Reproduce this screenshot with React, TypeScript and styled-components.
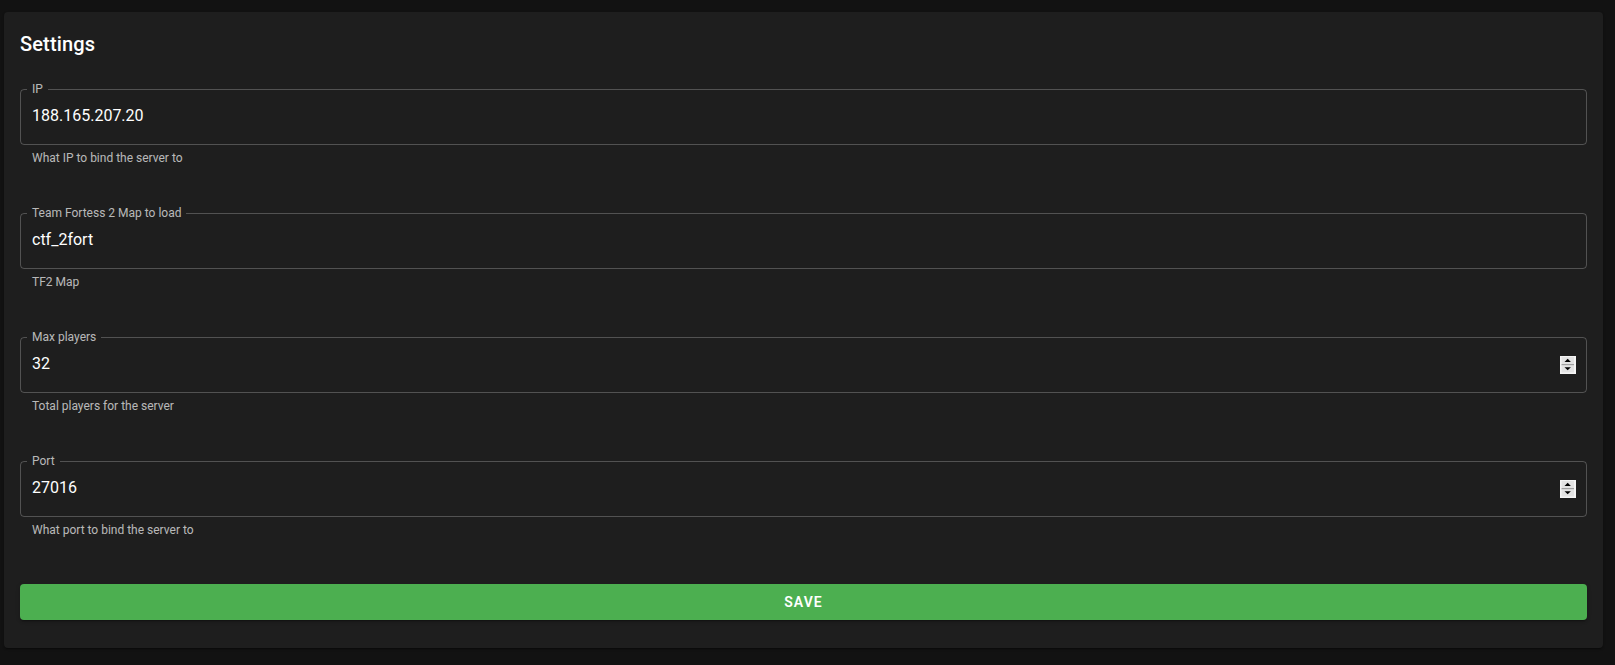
import React from "react";
import styled, { createGlobalStyle } from "styled-components";

const GlobalStyle = createGlobalStyle`
  html, body {
    margin: 0;
    padding: 0;
    background: #121212;
    font-family: Roboto, "Noto Sans", "Liberation Sans", sans-serif;
  }
`;

const Page = styled.div`
  padding: 12px 12px 18px 4px;
`;

const Paper = styled.section`
  background: #1e1e1e;
  border-radius: 4px;
  padding: 16px;
  box-shadow:
    0 2px 1px -1px rgba(0, 0, 0, 0.2),
    0 1px 1px 0 rgba(0, 0, 0, 0.14),
    0 1px 3px 0 rgba(0, 0, 0, 0.12);
`;

const Title = styled.h6`
  margin: 0 0 23px;
  color: #fff;
  font-size: 20px;
  font-weight: 500;
  line-height: 32px;
  letter-spacing: 0.15px;
`;

const Form = styled.form`
  display: flex;
  flex-direction: column;
  gap: 39px;
`;

const FieldGroup = styled.div`
  display: flex;
  flex-direction: column;
`;

const Outline = styled.fieldset`
  margin: 0;
  padding: 0 6px;
  border: 1px solid rgba(255, 255, 255, 0.23);
  border-radius: 4px;
  min-width: 0;
`;

const Label = styled.legend`
  padding: 0 5px;
  font-size: 12px;
  line-height: 12px;
  color: rgba(255, 255, 255, 0.7);
`;

const InputRow = styled.div`
  display: flex;
  align-items: center;
  height: 49px;
  padding-right: 4px;
`;

const Input = styled.input`
  flex: 1;
  min-width: 0;
  align-self: stretch;
  box-sizing: border-box;
  border: 0;
  outline: none;
  background: transparent;
  color: #fff;
  font-family: inherit;
  font-size: 16px;
  line-height: 23px;
  padding: 9px 5px 17px;
  margin: 0;

  &::-webkit-inner-spin-button,
  &::-webkit-outer-spin-button {
    -webkit-appearance: none;
    margin: 0;
  }
  -moz-appearance: textfield;
`;

const Spinner = styled.span`
  display: flex;
  width: 16px;
  height: 18px;
  margin-bottom: 5px;
`;

const HelperText = styled.p`
  margin: 3px 0 0;
  padding-left: 12px;
  font-size: 12px;
  line-height: 20px;
  color: rgba(255, 255, 255, 0.7);
`;

const SaveButton = styled.button`
  margin: 5px 0 12px;
  height: 36px;
  border: 0;
  border-radius: 4px;
  background: #4caf50;
  color: #fff;
  font-family: inherit;
  font-size: 14px;
  font-weight: 600;
  letter-spacing: 1.1px;
  text-transform: uppercase;
  cursor: pointer;
  box-shadow:
    0 3px 1px -2px rgba(0, 0, 0, 0.2),
    0 2px 2px 0 rgba(0, 0, 0, 0.14),
    0 1px 5px 0 rgba(0, 0, 0, 0.12);
`;

const SpinIcon = () => (
  <Spinner>
    <svg width="16" height="18" viewBox="0 0 16 18">
      <rect x="0" y="0" width="16" height="18" fill="#f4f4f4" />
      <rect x="1.5" y="1" width="12.5" height="7" fill="#e3e3e3" />
      <rect x="1.5" y="8" width="12.5" height="1.5" fill="#a0a0a0" />
      <rect x="1.5" y="9.5" width="12.5" height="7" fill="#e3e3e3" />
      <polygon points="4.5,6 7.7,2.8 10.9,6" fill="#000" />
      <polygon points="4.5,11.2 10.9,11.2 7.7,14.2" fill="#000" />
    </svg>
  </Spinner>
);

type FieldProps = {
  label: string;
  value: string;
  helper: string;
  numeric?: boolean;
};

const Field = ({ label, value, helper, numeric }: FieldProps) => (
  <FieldGroup>
    <Outline>
      <Label>{label}</Label>
      <InputRow>
        <Input type={numeric ? "number" : "text"} defaultValue={value} />
        {numeric && <SpinIcon />}
      </InputRow>
    </Outline>
    <HelperText>{helper}</HelperText>
  </FieldGroup>
);

const fields: FieldProps[] = [
  { label: "IP", value: "188.165.207.20", helper: "What IP to bind the server to" },
  { label: "Team Fortess 2 Map to load", value: "ctf_2fort", helper: "TF2 Map" },
  { label: "Max players", value: "32", helper: "Total players for the server", numeric: true },
  { label: "Port", value: "27016", helper: "What port to bind the server to", numeric: true },
];

export default function App() {
  return (
    <>
      <GlobalStyle />
      <Page>
        <Paper>
          <Title>Settings</Title>
          <Form onSubmit={(e) => e.preventDefault()}>
            {fields.map((f) => (
              <Field key={f.label} {...f} />
            ))}
            <SaveButton type="submit">Save</SaveButton>
          </Form>
        </Paper>
      </Page>
    </>
  );
}
